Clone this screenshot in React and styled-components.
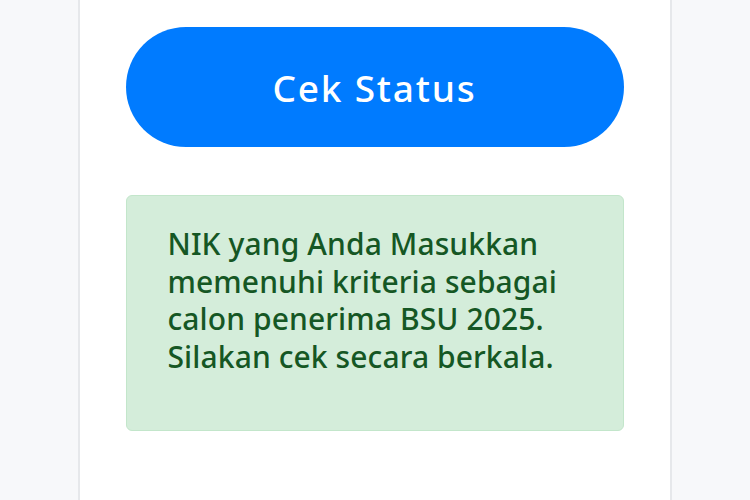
import React from 'react';
import styled, { createGlobalStyle } from 'styled-components';

const GlobalStyle = createGlobalStyle`
  html, body {
    margin: 0;
    padding: 0;
    background: #f7f8fa;
    font-family: "Noto Sans", "Open Sans", sans-serif;
  }
`;

const Page = styled.div`
  display: flex;
  justify-content: center;
  height: 500px;
  overflow: hidden;
`;

const Card = styled.main`
  box-sizing: border-box;
  width: 594px;
  margin-left: -1px;
  height: 100%;
  background: #ffffff;
  border-left: 2px solid #e6e8eb;
  border-right: 2px solid #e6e8eb;
  padding: 27px 46px 0;
  display: flex;
  flex-direction: column;
  gap: 48px;
`;

const StatusButton = styled.button`
  height: 120px;
  width: 100%;
  border: none;
  border-radius: 60px;
  background: #007bff;
  color: #ffffff;
  font-family: inherit;
  font-size: 37px;
  font-weight: 500;
  letter-spacing: 1.8px;
  cursor: pointer;
`;

const Alert = styled.div`
  box-sizing: border-box;
  height: 236px;
  background: #d4edda;
  border: 1px solid #c3e6cb;
  border-radius: 6px;
  color: #155724;
  padding: 29px 20px 0 41px;
  font-size: 30px;
  font-weight: 500;
  letter-spacing: 0.1px;
  line-height: 37.5px;
`;

const Line = styled.div`
  white-space: nowrap;
`;

const lines = [
  'NIK yang Anda Masukkan',
  'memenuhi kriteria sebagai',
  'calon penerima BSU 2025.',
  'Silakan cek secara berkala.',
];

export default function App() {
  return (
    <>
      <GlobalStyle />
      <Page>
        <Card>
          <StatusButton>Cek Status</StatusButton>
          <Alert>
            {lines.map((l) => (
              <Line key={l}>{l}</Line>
            ))}
          </Alert>
        </Card>
      </Page>
    </>
  );
}
